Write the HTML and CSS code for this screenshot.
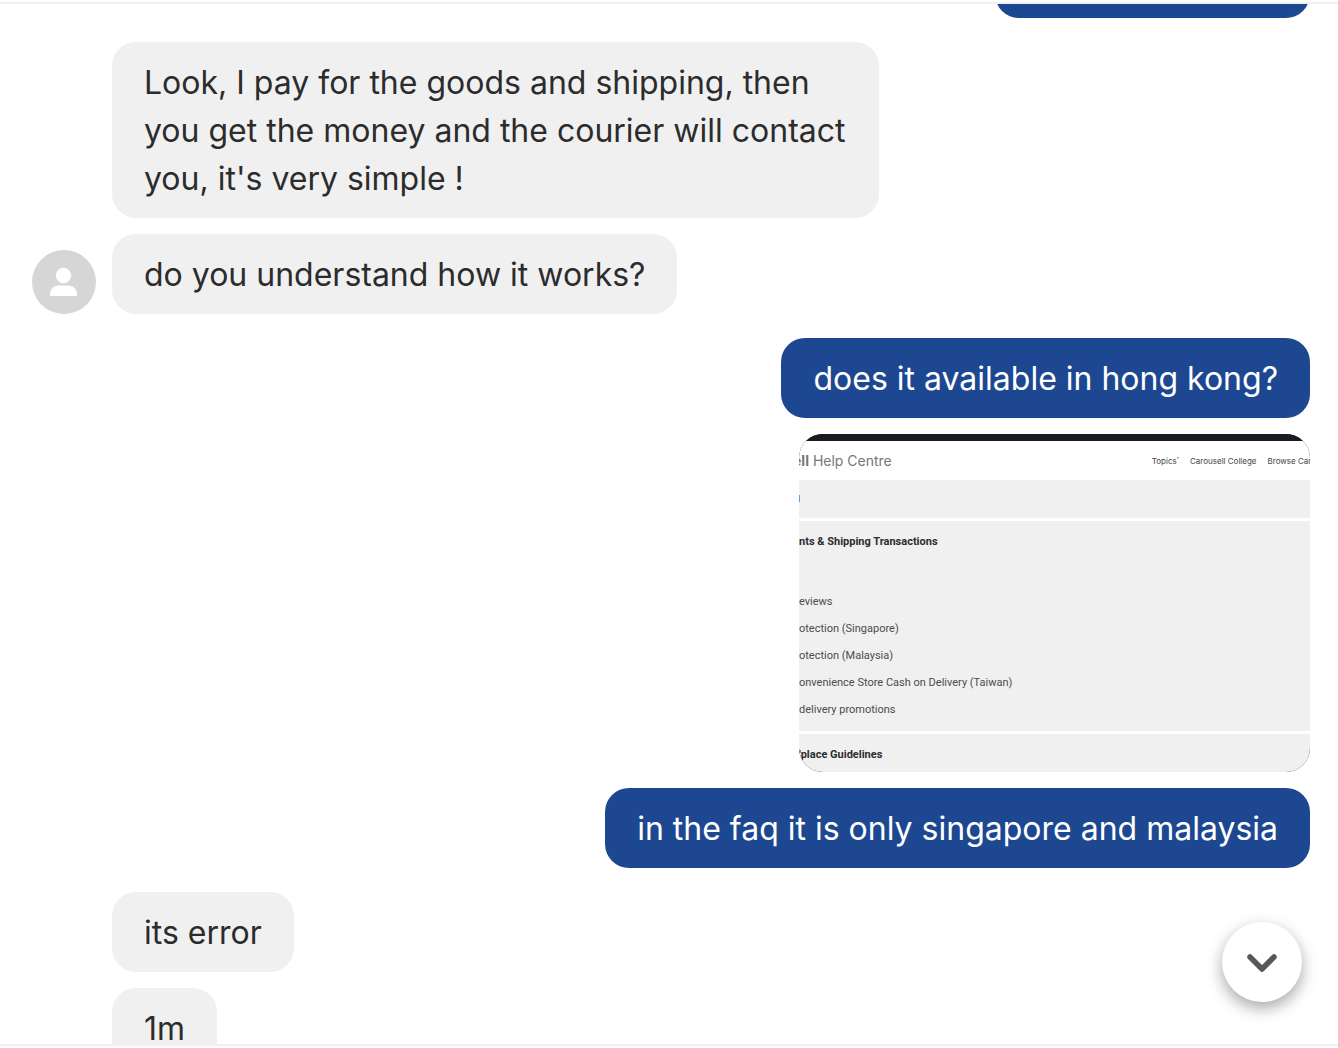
FILE: index.html
```html
<!DOCTYPE html>
<html lang="en">
<head>
    <meta charset="UTF-8">
    <meta name="viewport" content="width=device-width, initial-scale=1.0">
    <title>Chat</title>
    <link rel="stylesheet" href="styles.css">
</head>
<body>
    <main class="chat">
        <div class="messages">
            <div class="group sent">
                <div class="bubble bubble-empty"></div>
            </div>

            <div class="group received">
                <p class="bubble">Look, I pay for the goods and shipping, then you get the money and the courier will contact you, it's very simple !</p>
                <div class="row">
                    <svg class="avatar" viewBox="0 0 64 64" aria-hidden="true">
                        <circle cx="32" cy="32" r="32" fill="#d6d6d6"/>
                        <circle cx="31.5" cy="25.5" r="7.7" fill="#fff"/>
                        <path d="M18 46v-2c0-5 4-8.500 9-8.500h9c5 0 9 3.500 9 8.500v2z" fill="#fff"/>
                    </svg>
                    <p class="bubble">do you understand how it works?</p>
                </div>
            </div>

            <div class="group sent">
                <p class="bubble">does it available in hong kong?</p>
                <div class="attachment">
                    <div class="help-topbar"></div>
                    <div class="help-header">
                        <span class="help-logo"><b>ell</b> Help Centre</span>
                        <nav class="help-nav">
                            <a href="#">Topics<sup>˅</sup></a>
                            <a href="#">Carousell College</a>
                            <a href="#">Browse Caro</a>
                        </nav>
                    </div>
                    <div class="help-section help-crumb">g</div>
                    <div class="help-section help-main">
                        <h2>nts &amp; Shipping Transactions</h2>
                        <ul>
                            <li>eviews</li>
                            <li>otection (Singapore)</li>
                            <li>otection (Malaysia)</li>
                            <li>onvenience Store Cash on Delivery (Taiwan)</li>
                            <li>delivery promotions</li>
                        </ul>
                    </div>
                    <div class="help-section">
                        <h2>'place Guidelines</h2>
                    </div>
                </div>
                <p class="bubble">in the faq it is only singapore and malaysia</p>
            </div>

            <div class="group received">
                <p class="bubble">its error</p>
                <p class="bubble">1m</p>
            </div>
        </div>

        <button class="scroll-down" type="button" aria-label="Scroll to latest">
            <svg viewBox="0 0 80 80" aria-hidden="true">
                <path d="M28 35l12 12 12-12" fill="none" stroke="#57585a" stroke-width="5.500" stroke-linecap="round" stroke-linejoin="round"/>
            </svg>
        </button>
    </main>
</body>
</html>
```

FILE: styles.css
```css
* {
    margin: 0;
    padding: 0;
    box-sizing: border-box;
}

body {
    height: 100vh;
    padding: 2px 0;
    background-color: #fff;
    color: #2c2c2d;
    font-family: Inter, "Liberation Sans", sans-serif;
    overflow: hidden;
}

.chat {
    position: relative;
    height: 100%;
    border-top: 2px solid #f0f0f1;
    border-bottom: 2px solid #f0f0f1;
    overflow: hidden;
}

/* list starts part way through the first message */
.messages {
    display: flex;
    flex-direction: column;
    gap: 24px;
    margin-top: -66px;
    padding: 0 28px 0 32px;
}

.group {
    display: flex;
    flex-direction: column;
    gap: 16px;
}

.received {
    align-items: flex-start;
    padding-left: 80px;
}

.sent {
    align-items: flex-end;
}

.row {
    display: flex;
    align-items: flex-end;
    gap: 16px;
    margin-left: -80px;
}

.avatar {
    width: 64px;
    height: 64px;
}

.bubble {
    max-width: 767px;
    padding: 17px 32px 15px;
    border-radius: 24px;
    background-color: #f0f0f1;
    font-size: 32px;
    line-height: 48px;
}

.sent .bubble {
    background-color: #1d4891;
    color: #fff;
}

.bubble-empty {
    width: 315px;
    height: 80px;
}

/* Attached help centre page */
.attachment {
    width: 511px;
    border-radius: 24px;
    background-color: #1c1b21;
    font-family: Roboto, "Liberation Sans", sans-serif;
    font-size: 11px;
    overflow: hidden;
}

.help-topbar {
    height: 7px;
    background-color: #1c1b21;
}

.help-header {
    display: flex;
    align-items: center;
    justify-content: space-between;
    height: 39px;
    background-color: #fff;
    color: #77777a;
    font-family: Inter, "Liberation Sans", sans-serif;
    white-space: nowrap;
}

.help-logo {
    margin-left: -6px;
    font-size: 14px;
}

.help-nav {
    display: flex;
    gap: 11px;
    margin-right: -6px;
    font-size: 8px;
}

.help-nav a {
    color: #444;
    text-decoration: none;
}

.help-nav sup {
    font-size: 5px;
    line-height: 1;
}

.help-section {
    height: 38px;
    background-color: #f0f0f0;
    overflow: hidden;
}

.help-section + .help-section {
    height: 41px;
    border-top: 3px solid #fff;
}

.help-crumb {
    line-height: 36px;
    text-indent: -5px;
}

.help-section + .help-main {
    height: auto;
    padding-bottom: 8px;
}

.help-section h2 {
    font-size: 11px;
    font-weight: 700;
    line-height: 42px;
}

.help-main ul {
    margin-top: 25px;
    color: #4c4c4c;
    line-height: 27px;
    list-style: none;
}

.scroll-down {
    position: absolute;
    right: 36px;
    bottom: 42px;
    width: 80px;
    height: 80px;
    border: none;
    border-radius: 50%;
    background-color: #fff;
    box-shadow: 0 6px 16px rgba(0, 0, 0, 0.35);
    cursor: pointer;
}

.scroll-down svg {
    display: block;
    width: 80px;
    height: 80px;
}
```
